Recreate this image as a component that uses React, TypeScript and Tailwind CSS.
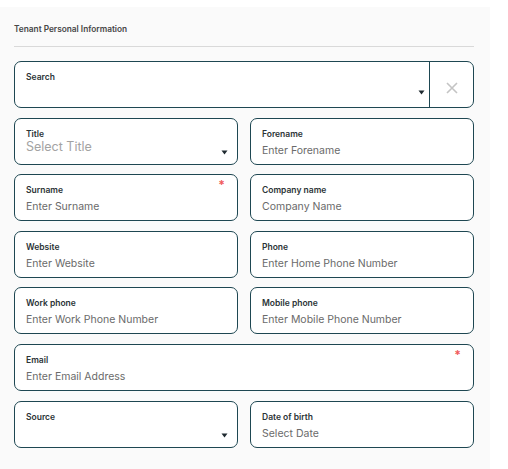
import React from "react";

const Caret = () => (
  <svg width="7" height="5" viewBox="0 0 7 5" className="absolute">
    <path d="M0.5 0.5 L6.5 0.5 L3.5 4.5 Z" fill="#1f2a30" />
  </svg>
);

type FieldProps = {
  label: string;
  value?: string;
  required?: boolean;
  select?: boolean;
  light?: boolean;
  className?: string;
};

function Field({ label, value, required, select, light, className = "" }: FieldProps) {
  return (
    <div
      className={`relative h-[47px] rounded-[7px] border border-[#1e4752] bg-white px-[11px] ${className}`}
    >
      <div className="pt-[9px] text-[8.5px] leading-[12px] font-semibold text-[#2b3336]">{label}</div>
      {value && (
        light ? (
          <div className="mt-[-1px] text-[12.5px] leading-[16px] text-[#a3a3a3]">{value}</div>
        ) : (
          <div className="mt-[4px] text-[10.5px] leading-[14px] text-[#6a6a6a]">{value}</div>
        )
      )}
      {required && (
        <span className="absolute right-[12px] top-[3px] text-[12px] leading-[14px] font-bold text-[#f05a5a]">*</span>
      )}
      {select && (
        <div className="absolute right-[16px] top-[31px]">
          <Caret />
        </div>
      )}
    </div>
  );
}

export default function App() {
  return (
    <div className="h-[469px] w-[508px] bg-white" style={{ fontFamily: "Inter, 'Noto Sans', sans-serif" }}>
      <div className="mt-[7px] h-[462px] w-[490px] bg-[#fafafa] px-[14px] pt-[16px]">
        <div className="text-[8.3px] leading-[12px] font-semibold text-[#474747]">Tenant Personal Information</div>
        <div className="mt-[11px] h-px w-[460px] bg-[#d9d9d9]" />
        <div className="mt-[14px] flex w-[460px] flex-col gap-[9.6px]">
          <div className="relative flex h-[47px] rounded-[7px] border border-[#1e4752] bg-white">
            <div className="relative flex-1 px-[11px]">
              <div className="pt-[9px] text-[8.5px] leading-[12px] font-semibold text-[#2b3336]">Search</div>
              <div className="absolute right-[11px] top-[28px]">
                <Caret />
              </div>
            </div>
            <div className="flex w-[44px] items-center justify-center border-l border-[#1e4752]">
              <svg width="12" height="12" viewBox="0 0 12 12" className="mt-[7px]">
                <path d="M1 1 L11 11 M11 1 L1 11" stroke="#c4c4c4" strokeWidth="1.6" />
              </svg>
            </div>
          </div>
          <div className="grid grid-cols-2 gap-x-[12px] gap-y-[9.6px]">
            <Field label="Title" value="Select Title" light select />
            <Field label="Forename" value="Enter Forename" />
            <Field label="Surname" value="Enter Surname" required />
            <Field label="Company name" value="Company Name" />
            <Field label="Website" value="Enter Website" />
            <Field label="Phone" value="Enter Home Phone Number" />
            <Field label="Work phone" value="Enter Work Phone Number" />
            <Field label="Mobile phone" value="Enter Mobile Phone Number" />
            <Field label="Email" value="Enter Email Address" required className="col-span-2" />
            <Field label="Source" select />
            <Field label="Date of birth" value="Select Date" />
          </div>
        </div>
      </div>
    </div>
  );
}
